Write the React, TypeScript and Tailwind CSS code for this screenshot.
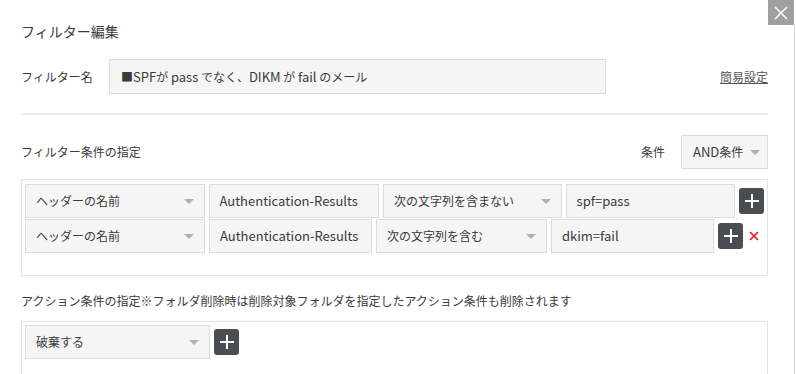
import React from "react";

const Arrow = () => (
    <span className="ml-auto w-0 h-0 border-l-[5px] border-r-[5px] border-t-[5px] border-l-transparent border-r-transparent border-t-[#b0b0b0]" />
);

const Plus = ({ className = "" }: { className?: string }) => (
    <button className={`flex items-center justify-center w-[25px] h-[26px] rounded-[3px] bg-[#4a4d52] ${className}`}>
        <svg width="16" height="16" viewBox="0 0 16 16">
            <path d="M8 1v14M1 8h14" stroke="#fff" strokeWidth="2" />
        </svg>
    </button>
);

const Select = ({ label, w }: { label: string; w: string }) => (
    <div className={`flex items-center h-[34px] pl-[10px] pr-[10px] border border-[#dcdcdc] bg-[#f5f5f5] ${w}`}>
        <span>{label}</span>
        <Arrow />
    </div>
);

const Field = ({ value, w }: { value: string; w: string }) => (
    <div className={`flex items-center h-[34px] pl-[10px] border border-[#dcdcdc] bg-[#f5f5f5] text-[13px] ${w}`}>
        {value}
    </div>
);

const L = ({ children }: { children: React.ReactNode }) => <span className="text-[13px]">{children}</span>;

const App = () => {
    return (
        <div className="relative w-[796px] h-[374px] overflow-hidden bg-white text-[#3a3a3a] text-[12px] font-['Noto_Sans_CJK_JP',sans-serif]">
            <div className="absolute right-[2px] top-0 w-[26px] h-[25px] bg-[#a0a0a0] flex items-center justify-center">
                <svg width="14" height="14" viewBox="0 0 14 14">
                    <path d="M1 1l12 12M13 1L1 13" stroke="#fff" strokeWidth="1.5" />
                </svg>
            </div>
            <div className="absolute right-[1px] top-[25px] bottom-0 w-[1px] bg-[#d8d8d8]" />

            <div className="flex flex-col w-[747px] ml-[21px]">
                <h1 className="mt-[21px] text-[14px] leading-[20px]">フィルター編集</h1>

                <div className="flex items-center mt-[18px]">
                    <span className="w-[88px]">フィルター名</span>
                    <div className="flex items-center w-[497px] h-[35px] pl-[11px] border border-[#dcdcdc] bg-[#f5f5f5]">
                        <span>■<L>SPF</L>が <L>pass</L> でなく、<L>DIKM</L> が <L>fail</L> のメール</span>
                    </div>
                    <a href="#" className="ml-auto text-[#555] underline">簡易設定</a>
                </div>

                <div className="mt-[19px] h-[2px] bg-[#eeeeee]" />

                <div className="flex items-center mt-[20px]">
                    <span>フィルター条件の指定</span>
                    <span className="ml-auto mr-[16px]">条件</span>
                    <div className="flex items-center w-[87px] h-[34px] pl-[11px] pr-[7px] border border-[#dcdcdc] bg-[#f5f5f5]">
                        <span><L>AND</L>条件</span>
                        <Arrow />
                    </div>
                </div>

                <div className="mt-[10px] h-[97px] border border-[#e3e3e3] pt-[4px] px-[3px] flex flex-col gap-[1px]">
                    <div className="flex items-center gap-[4px]">
                        <Select label="ヘッダーの名前" w="w-[180px]" />
                        <Field value="Authentication-Results" w="w-[171px]" />
                        <Select label="次の文字列を含まない" w="w-[179px]" />
                        <Field value="spf=pass" w="w-[170px]" />
                        <Plus />
                    </div>
                    <div className="flex items-center gap-[4px]">
                        <Select label="ヘッダーの名前" w="w-[180px]" />
                        <Field value="Authentication-Results" w="w-[163px]" />
                        <Select label="次の文字列を含む" w="w-[171px]" />
                        <Field value="dkim=fail" w="w-[163px]" />
                        <Plus />
                        <svg width="10" height="10" viewBox="0 0 10 10" className="ml-[2px]">
                            <path d="M1 1l8 8M9 1L1 9" stroke="#e8141c" strokeWidth="1.6" />
                        </svg>
                    </div>
                </div>

                <p className="mt-[15px] leading-[20px]">
                    アクション条件の指定※フォルダ削除時は削除対象フォルダを指定したアクション条件も削除されます
                </p>

                <div className="mt-[10px] h-[80px] border border-[#e3e3e3] pt-[3px] px-[3px]">
                    <div className="flex items-center gap-[4px]">
                        <Select label="破棄する" w="w-[185px]" />
                        <Plus />
                    </div>
                </div>
            </div>
        </div>
    );
};

export default App;
